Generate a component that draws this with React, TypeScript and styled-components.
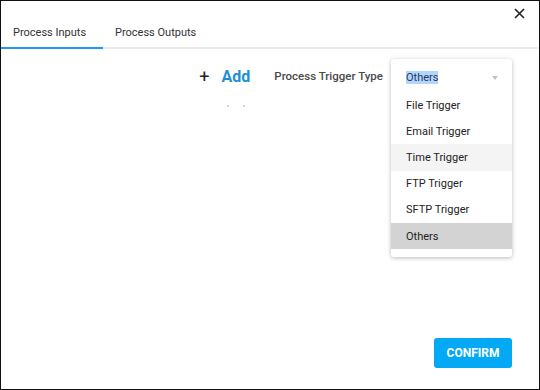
import React from 'react';
import styled, { createGlobalStyle } from 'styled-components';

const GlobalStyle = createGlobalStyle`
  html, body {
    margin: 0;
    padding: 0;
    background: #fff;
  }
  body {
    font-family: Roboto, "Liberation Sans", sans-serif;
  }
`;

const Dialog = styled.div`
  width: 540px;
  height: 390px;
  box-sizing: border-box;
  border: 1px solid #111;
  display: flex;
  flex-direction: column;
  background: #fff;
`;

const Header = styled.div`
  height: 13px;
  display: flex;
  justify-content: flex-end;
  align-items: flex-start;
  padding: 6px 13px 0 0;
`;

const CloseButton = styled.button`
  border: none;
  background: none;
  padding: 0;
  width: 13px;
  height: 13px;
  cursor: pointer;
  display: flex;
`;

const TabBar = styled.div`
  display: flex;
  border-bottom: 2px solid #ebebeb;
`;

const Tab = styled.div<{ active?: boolean }>`
  padding: 6px 12px 8px;
  font-size: 11px;
  color: #333;
  margin-bottom: -2px;
  border-bottom: 2px solid ${(p) => (p.active ? '#2196f3' : 'transparent')};
  min-width: ${(p) => (p.active ? '78px' : 'auto')};
`;

const Content = styled.div`
  flex: 1;
  display: flex;
  justify-content: flex-end;
  align-items: flex-start;
  padding: 10px 27px 0 0;
`;

const AddColumn = styled.div`
  display: flex;
  flex-direction: column;
  align-items: center;
  margin-right: 24px;
  padding-top: 8px;
`;

const AddButton = styled.div`
  display: flex;
  align-items: center;
  gap: 12px;
`;

const Plus = styled.span`
  font-size: 18px;
  color: #222;
  line-height: 20px;
`;

const AddText = styled.span`
  font-size: 16px;
  font-weight: 700;
  color: #1e8fd6;
  line-height: 20px;
`;

const Dots = styled.div`
  display: flex;
  gap: 14px;
  margin-top: 18px;
  margin-left: 22px;
`;

const Dot = styled.span`
  width: 2px;
  height: 2px;
  background: #c8c8c8;
  border-radius: 1px;
`;

const Label = styled.div`
  font-size: 11.5px;
  font-weight: 500;
  color: #4a4a4a;
  padding-top: 10px;
  margin-right: 8px;
`;

const Card = styled.div`
  width: 121px;
  background: #fff;
  border-radius: 3px;
  box-shadow: 0 1px 4px rgba(0, 0, 0, 0.28);
  padding-bottom: 8px;
`;

const SelectBox = styled.div`
  height: 33px;
  box-sizing: border-box;
  display: flex;
  align-items: center;
  justify-content: space-between;
  padding: 4px 15px 0;
  font-size: 11px;
  color: #222;
`;

const Selected = styled.span`
  background: #b4d5fb;
  color: #1f3a63;
`;

const Caret = styled.span`
  width: 0;
  height: 0;
  border-left: 3.5px solid transparent;
  border-right: 3.5px solid transparent;
  border-top: 4px solid #c4c4c4;
  margin-right: -1px;
`;

const Option = styled.div<{ tone?: 'hover' | 'selected' }>`
  height: 26.2px;
  display: flex;
  align-items: center;
  padding-left: 15px;
  font-size: 11px;
  color: #222;
  background: ${(p) =>
    p.tone === 'selected' ? '#d3d3d3' : p.tone === 'hover' ? '#f4f4f4' : '#fff'};
`;

const Footer = styled.div`
  display: flex;
  justify-content: flex-end;
  padding: 0 27px 21px 0;
`;

const ConfirmButton = styled.button`
  width: 78px;
  height: 30px;
  border: none;
  border-radius: 3px;
  background: #03a9f4;
  color: #fff;
  font-family: Roboto, "Liberation Sans", sans-serif;
  font-weight: 700;
  font-size: 12px;
  cursor: pointer;
`;

const options: { name: string; tone?: 'hover' | 'selected' }[] = [
  { name: 'File Trigger' },
  { name: 'Email Trigger' },
  { name: 'Time Trigger', tone: 'hover' },
  { name: 'FTP Trigger' },
  { name: 'SFTP Trigger' },
  { name: 'Others', tone: 'selected' },
];

const App: React.FC = () => {
  return (
    <>
      <GlobalStyle />
      <Dialog>
        <Header>
          <CloseButton aria-label="close">
            <svg width="13" height="13" viewBox="0 0 13 13">
              <path d="M2 2 L11 11 M11 2 L2 11" stroke="#222" strokeWidth="1.6" />
            </svg>
          </CloseButton>
        </Header>
        <TabBar>
          <Tab active>Process Inputs</Tab>
          <Tab>Process Outputs</Tab>
        </TabBar>
        <Content>
          <AddColumn>
            <AddButton>
              <Plus>+</Plus>
              <AddText>Add</AddText>
            </AddButton>
            <Dots>
              <Dot />
              <Dot />
            </Dots>
          </AddColumn>
          <Label>Process Trigger Type</Label>
          <Card>
            <SelectBox>
              <Selected>Others</Selected>
              <Caret />
            </SelectBox>
            {options.map((o) => (
              <Option key={o.name} tone={o.tone}>
                {o.name}
              </Option>
            ))}
          </Card>
        </Content>
        <Footer>
          <ConfirmButton>CONFIRM</ConfirmButton>
        </Footer>
      </Dialog>
    </>
  );
};

export default App;
